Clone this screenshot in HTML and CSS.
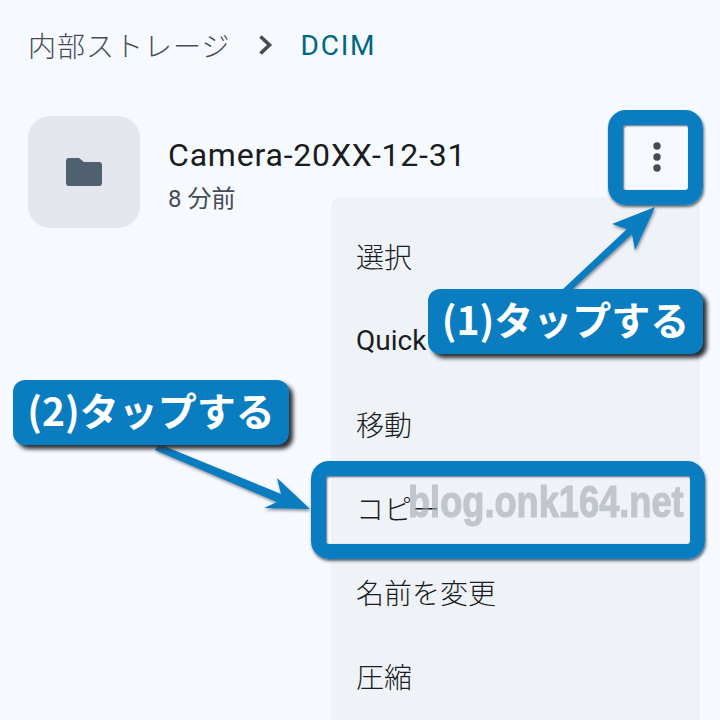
FILE: index.html
```html
<!DOCTYPE html>
<html lang="ja">
<head>
<meta charset="utf-8">
<title>DCIM</title>
<link rel="stylesheet" href="styles.css">
</head>
<body>
<main class="page">
  <nav class="crumbs">
    <span class="crumb">内部ストレージ</span>
    <svg class="chevron" viewBox="0 0 16 20"><path d="M2.500 1.500 11.500 10 2.500 18.500" fill="none" stroke="#454c55" stroke-width="3.600"/></svg>
    <span class="crumb-current">DCIM</span>
  </nav>
  <section class="row">
    <div class="thumb">
      <svg class="folder" viewBox="0 0 36 28"><path d="M3 0H13L18 4H33A3 3 0 0 1 36 7V25A3 3 0 0 1 33 28H3A3 3 0 0 1 0 25V3A3 3 0 0 1 3 0Z" fill="#4f6070"/></svg>
    </div>
    <div class="meta">
      <div class="name">Camera-20XX-12-31</div>
      <div class="time">8 分前</div>
    </div>
  </section>
  <svg class="kebab" viewBox="0 0 10 34"><circle cx="5" cy="5" r="3.700"/><circle cx="5" cy="16" r="3.700"/><circle cx="5" cy="27" r="3.700"/></svg>
  <ul class="menu">
    <li>選択</li>
    <li class="latin">Quick Share</li>
    <li>移動</li>
    <li>コピー</li>
    <li>名前を変更</li>
    <li>圧縮</li>
  </ul>
  <div class="watermark">blog.onk164.net</div>
  <div class="frame frame-kebab"></div>
  <div class="frame frame-copy"></div>
  <svg class="arrows" viewBox="0 0 720 720">
    <g class="arrow">
      <path d="M562 290 566 295 632 234 635 250 655 207 612 224 627 229Z"/>
      <path d="M159 444 155 450 277 502 264 508 310 509 277 478 281 494Z"/>
    </g>
  </svg>
  <div class="callout callout-one">(1)タップする</div>
  <div class="callout callout-two">(2)タップする</div>
</main>
</body>
</html>
```
FILE: styles.css
```css
* { box-sizing: border-box; }
html, body { margin: 0; padding: 0; }
body { background: #f6f9fe; font-family: Roboto, "Noto Sans CJK JP", sans-serif; }
.page { position: relative; width: 720px; height: 720px; overflow: hidden; background: #f6f9fe; }

.crumbs { display: flex; align-items: center; height: 90px; padding: 0 0 0 28px; }
.crumb { font-size: 28px; letter-spacing: 1px; color: #454c55; font-weight: 300; }
.chevron { width: 16px; height: 20px; margin-left: 28px; margin-right: 26px; }
.crumb-current { font-size: 28px; color: #006780; letter-spacing: 1.800px; }

.row { display: flex; align-items: center; gap: 28px; padding: 26px 0 0 28px; }
.thumb { display: flex; align-items: center; justify-content: center; width: 112px; height: 112px; border-radius: 22px; background: #e3e7ed; }
.folder { width: 36px; height: 28px; }
.meta { display: flex; flex-direction: column; gap: 8px; padding-top: 6px; }
.name { font-size: 32px; line-height: 40px; color: #191c20; letter-spacing: 0.800px; }
.time { font-size: 24px; line-height: 32px; color: #454c55; }

.kebab { position: absolute; left: 652px; top: 141px; width: 10px; height: 34px; fill: #454c55; }

.menu { position: absolute; left: 333px; top: 199px; width: 365px; height: 530px; margin: 0; padding: 15px 0 0; list-style: none; background: #eff3f8; border-radius: 6px; box-shadow: 0 0 3px rgba(60, 70, 90, 0.15); }
.menu li { display: flex; align-items: center; height: 84px; padding-left: 23px; font-size: 28px; color: #191c20; font-weight: 300; }
.menu .latin { font-weight: 400; }

.watermark { position: absolute; left: 408px; top: 477px; white-space: nowrap; font-family: "Liberation Sans", sans-serif; font-weight: 700; font-size: 44px; line-height: 50px; color: #a4a8b0; -webkit-text-stroke: 1.200px #a4a8b0; opacity: 0.6; transform: scaleX(0.823); transform-origin: left center; }

.frame { position: absolute; border: 15px solid #0a7cc0; border-radius: 18px; box-shadow: 1px 2px 3px rgba(20, 40, 60, 0.7), inset 1px 1px 2px rgba(20, 40, 60, 0.7); }
.frame-kebab { left: 608px; top: 110px; width: 95px; height: 95px; }
.frame-copy { left: 311px; top: 461px; width: 394px; height: 98px; }

.arrows { position: absolute; left: 0; top: 0; width: 720px; height: 720px; }
.arrow { fill: #0a7cc0; filter: drop-shadow(1px 2px 1.500px rgba(20, 40, 60, 0.5)); }

.callout { position: absolute; display: flex; align-items: center; justify-content: center; height: 65px; padding-bottom: 7px; border-radius: 12px; background: #0a7cc0; color: #fff; font-family: "Noto Sans CJK JP", sans-serif; font-weight: 700; font-size: 39px; white-space: nowrap; box-shadow: 4px 4px 4px #2a2f33; }
.callout-one { left: 428px; top: 289px; width: 275px; }
.callout-two { left: 13px; top: 380px; width: 276px; }
```
